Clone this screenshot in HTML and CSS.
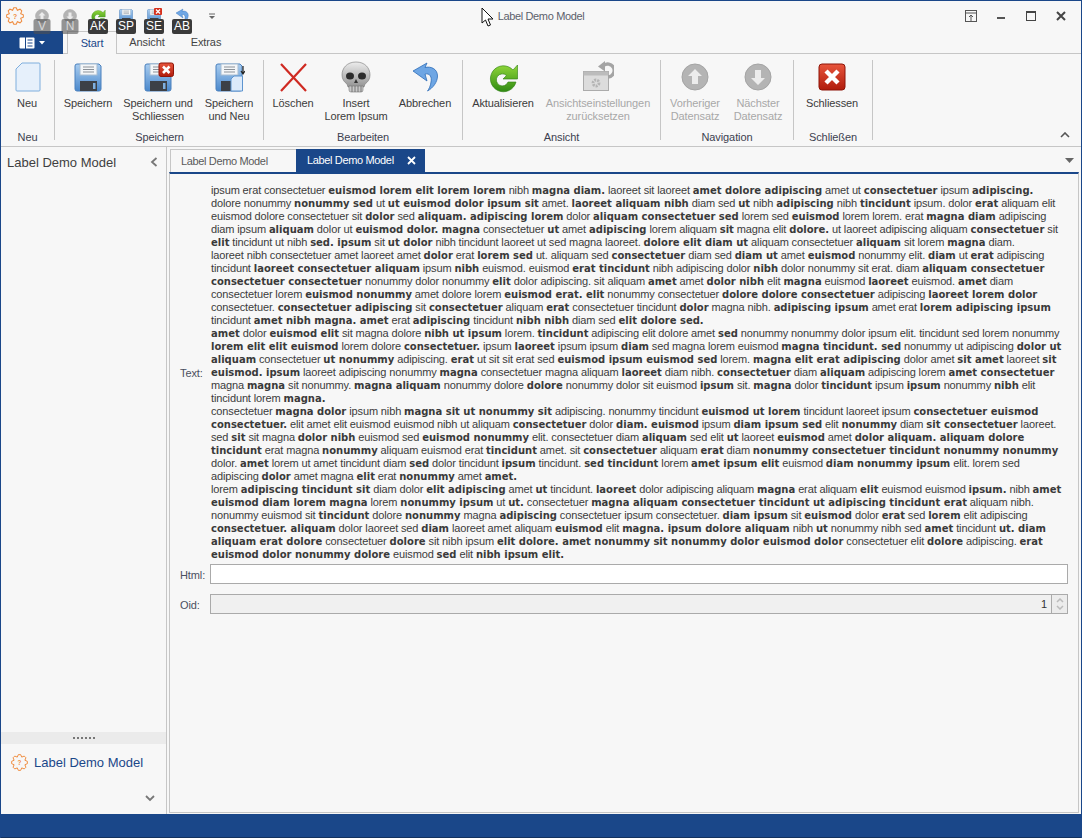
FILE: index.html
```html
<!DOCTYPE html>
<html lang="de">
<head>
<meta charset="UTF-8">
<title>Label Demo Model</title>
<link rel="stylesheet" href="styles.css">
</head>
<body>

<svg class="defs" width="0" height="0">
  <defs>
    <linearGradient id="floppyBlue" x1="0" y1="0" x2="0" y2="1">
      <stop offset="0" stop-color="#a9cdf0"/>
      <stop offset="1" stop-color="#4a88cc"/>
    </linearGradient>
    <linearGradient id="greenArrow" x1="0" y1="0" x2="0" y2="1">
      <stop offset="0" stop-color="#8fd63a"/>
      <stop offset="1" stop-color="#2f8a12"/>
    </linearGradient>
    <linearGradient id="redBox" x1="0" y1="0" x2="0" y2="1">
      <stop offset="0" stop-color="#e8553c"/>
      <stop offset="1" stop-color="#b01c0c"/>
    </linearGradient>
    <linearGradient id="skullGrey" x1="0" y1="0" x2="0" y2="1">
      <stop offset="0" stop-color="#ececec"/>
      <stop offset="1" stop-color="#949494"/>
    </linearGradient>
    <symbol id="floppy" viewBox="0 0 32 32">
      <path d="M5 3h22l2 2v23a2 2 0 0 1-2 2H5a2 2 0 0 1-2-2V5a2 2 0 0 1 2-2z" fill="url(#floppyBlue)" stroke="#4a80bd"/>
      <rect x="8" y="3" width="17" height="11" fill="#f4f6f8" stroke="#a8bdd2"/>
      <path d="M11 6h11M11 8.500h11M11 11h11" stroke="#8b9198"/>
      <rect x="8" y="20" width="17" height="10" fill="#3c4046"/>
      <rect x="21" y="22" width="2.500" height="6" fill="#7fb0e0"/>
    </symbol>
    <symbol id="refresh" viewBox="0 0 32 32">
      <path d="M26 9A13 13 0 1 0 29 21h-8a6 6 0 1 1-1.500-6.500L16 18h14.500V4z" fill="url(#greenArrow)" stroke="#2c7d10" stroke-width=".6"/>
    </symbol>
    <symbol id="undo" viewBox="0 0 32 32">
      <path d="M18 2L4 10l14 10-2-7c5-1 7 3 6 8-.5 4-2 7-3.500 9 5.500-3 10-9 10-15 0-7-6.500-10-12.500-8.500z" fill="#6ea6e4" stroke="#2e6db8" stroke-width=".8"/>
    </symbol>
    <symbol id="navUp" viewBox="0 0 32 32">
      <circle cx="16" cy="16" r="13" fill="#b4b4b4" stroke="#a4a4a4"/>
      <path d="M16 8l7 7h-4v8h-6v-8H9z" fill="#ececec"/>
    </symbol>
    <symbol id="navDown" viewBox="0 0 32 32">
      <circle cx="16" cy="16" r="13" fill="#b4b4b4" stroke="#a4a4a4"/>
      <path d="M16 24l-7-7h4V9h6v8h4z" fill="#ececec"/>
    </symbol>
    <symbol id="gearOutline" viewBox="0 0 16 16">
      <path d="M6.900.6h2.200l1 2.320 2.360-.95 1.570 1.570-.95 2.360 2.320 1v2.200l-2.320 1 .95 2.360-1.570 1.570-2.360-.95-1 2.320H6.900l-1-2.320-2.360.95-1.570-1.570.95-2.360-2.320-1V6.900l2.320-1-.95-2.360 1.570-1.570 2.360.95z" fill="none" stroke="#ef8a3c" stroke-width=".9"/>
      <text x="8" y="10.500" text-anchor="middle" class="gear-mark">?</text>
    </symbol>
  </defs>
</svg>

<div class="window">

  <div class="titlebar">
    <div class="quickbar">
      <svg class="app-icon" width="18" height="18"><use href="#gearOutline"/></svg>
      <div class="qa-item">
        <svg width="16" height="16"><use href="#navUp"/></svg>
        <span class="keytip keytip-off">V</span>
      </div>
      <div class="qa-item">
        <svg width="16" height="16"><use href="#navDown"/></svg>
        <span class="keytip keytip-off">N</span>
      </div>
      <div class="qa-item">
        <svg width="16" height="16"><use href="#refresh"/></svg>
        <span class="keytip">AK</span>
      </div>
      <div class="qa-item">
        <svg width="16" height="16"><use href="#floppy"/></svg>
        <span class="keytip">SP</span>
      </div>
      <div class="qa-item">
        <svg width="16" height="16" viewBox="0 0 16 16">
          <use href="#floppy" width="16" height="16"/>
          <rect x="8" y="0" width="8" height="7" rx="1" fill="#d5301c"/>
          <path d="M10 1.500l4 4M14 1.500l-4 4" stroke="#fff" stroke-width="1.300"/>
        </svg>
        <span class="keytip">SE</span>
      </div>
      <div class="qa-item">
        <svg width="16" height="16"><use href="#undo"/></svg>
        <span class="keytip">AB</span>
      </div>
      <svg class="qa-more" width="8" height="7" viewBox="0 0 8 7">
        <path d="M1 1h6" stroke="#666"/>
        <path d="M1 3h6L4 6z" fill="#666"/>
      </svg>
    </div>
    <div class="window-title">Label Demo Model</div>
    <div class="window-controls">
      <svg width="14" height="14" viewBox="0 0 14 14">
        <rect x="1.500" y="1.500" width="11" height="11" fill="none" stroke="#555"/>
        <path d="M1 4h12M7 12V6M5 8l2-2 2 2" fill="none" stroke="#555"/>
      </svg>
      <svg width="14" height="14" viewBox="0 0 14 14"><rect x="3" y="8" width="8" height="2" fill="#555"/></svg>
      <svg width="14" height="14" viewBox="0 0 14 14">
        <rect x="2.500" y="2.500" width="9" height="9" fill="none" stroke="#444"/>
        <rect x="2" y="2" width="10" height="2" fill="#444"/>
      </svg>
      <svg width="14" height="14" viewBox="0 0 14 14"><path d="M3 3l8 8M11 3l-8 8" stroke="#444" stroke-width="2"/></svg>
    </div>
  </div>

  <div class="ribbon-tabs">
    <div class="file-tab">
      <svg width="16" height="12" viewBox="0 0 16 12">
        <rect x="0.500" y="0.500" width="15" height="11" rx="1" fill="#fff"/>
        <path d="M6.500 0v12" stroke="#1a4789"/>
        <path d="M8.500 3h5M8.500 6h5M8.500 9h5" stroke="#1a4789"/>
      </svg>
      <svg width="6" height="4" viewBox="0 0 6 4"><path d="M0 0h6L3 3.500z" fill="#fff"/></svg>
    </div>
    <div class="tab tab-active">Start</div>
    <div class="tab tab-ansicht">Ansicht</div>
    <div class="tab tab-extras">Extras</div>
  </div>

  <div class="ribbon">
    <div class="group group-neu">
      <div class="buttons">
        <div class="btn btn-52">
          <svg width="32" height="32" viewBox="0 0 32 32">
            <path d="M11 2h17a1 1 0 0 1 1 1v26a1 1 0 0 1-1 1H6a1 1 0 0 1-1-1V8z" fill="#e6f0fb" stroke="#7faedd"/>
          </svg>
          <span class="btn-label">Neu</span>
        </div>
      </div>
      <div class="group-label">Neu</div>
    </div>

    <div class="group group-speichern">
      <div class="buttons">
        <div class="btn btn-64">
          <svg width="32" height="32"><use href="#floppy"/></svg>
          <span class="btn-label">Speichern</span>
        </div>
        <div class="btn btn-76">
          <svg width="32" height="32" viewBox="0 0 32 32">
            <use href="#floppy" width="32" height="32"/>
            <rect x="17" y="2" width="14.500" height="13.500" rx="2" fill="url(#redBox)" stroke="#8e1508"/>
            <path d="M21 5.500l6.500 6.500M27.500 5.500L21 12" stroke="#fff" stroke-width="2.600"/>
          </svg>
          <span class="btn-label">Speichern und<br>Schliessen</span>
        </div>
        <div class="btn btn-66">
          <svg width="32" height="32" viewBox="0 0 32 32">
            <use href="#floppy" width="32" height="32"/>
            <path d="M21 15h8.500v15H18V18z" fill="#dceafa" stroke="#5d94cf"/>
            <path d="M30 5v7M28 10l2 3 2-3" fill="none" stroke="#222" stroke-width="1.200"/>
          </svg>
          <span class="btn-label">Speichern<br>und Neu</span>
        </div>
      </div>
      <div class="group-label">Speichern</div>
    </div>

    <div class="group group-bearbeiten">
      <div class="buttons">
        <div class="btn btn-58">
          <svg width="32" height="32" viewBox="0 0 32 32">
            <path d="M4 3l25 27M29 3L4 30" stroke="#cf2a22" stroke-width="2.200"/>
          </svg>
          <span class="btn-label">Löschen</span>
        </div>
        <div class="btn btn-68">
          <svg width="32" height="32" viewBox="0 0 32 32">
            <path d="M16 1C7 1 2 7 2 14c0 4 2 7 5 9l1 3h16l1-3c3-2 5-5 5-9 0-7-5-13-14-13z" fill="url(#skullGrey)" stroke="#777" stroke-width=".6"/>
            <ellipse cx="10" cy="15" rx="4" ry="3.600" fill="#2c2c2c"/>
            <ellipse cx="22" cy="15" rx="4" ry="3.600" fill="#2c2c2c"/>
            <path d="M16 18l-2 4h4z" fill="#333"/>
            <path d="M9 25h14v4a2 2 0 0 1-2 2H11a2 2 0 0 1-2-2z" fill="#c9c9c9" stroke="#777" stroke-width=".6"/>
            <path d="M12 25v6M15 25v6M18 25v6M21 25v6" stroke="#666" stroke-width=".8"/>
          </svg>
          <span class="btn-label">Insert<br>Lorem Ipsum</span>
        </div>
        <div class="btn btn-70">
          <svg width="32" height="32"><use href="#undo"/></svg>
          <span class="btn-label">Abbrechen</span>
        </div>
      </div>
      <div class="group-label">Bearbeiten</div>
    </div>

    <div class="group group-ansicht">
      <div class="buttons">
        <div class="btn btn-80">
          <svg width="32" height="32"><use href="#refresh"/></svg>
          <span class="btn-label">Aktualisieren</span>
        </div>
        <div class="btn btn-110 btn-off">
          <svg width="32" height="32" viewBox="0 0 32 32">
            <rect x="1.500" y="10.500" width="25" height="19" fill="#dcdcdc" stroke="#ababab"/>
            <rect x="1.500" y="10.500" width="25" height="4" fill="#bcbcbc"/>
            <circle cx="14" cy="22" r="3" fill="none" stroke="#b4b4b4" stroke-width="2.800" stroke-dasharray="2 1"/>
            <path d="M21 5a6.500 6.500 0 1 1 5 11" fill="none" stroke="#a4a4a4" stroke-width="3.400"/>
            <path d="M23 0l-7 5.500 7 5z" fill="#a4a4a4"/>
          </svg>
          <span class="btn-label">Ansichtseinstellungen<br>zurücksetzen</span>
        </div>
      </div>
      <div class="group-label">Ansicht</div>
    </div>

    <div class="group group-navigation">
      <div class="buttons">
        <div class="btn btn-68 btn-off">
          <svg width="32" height="32"><use href="#navUp"/></svg>
          <span class="btn-label">Vorheriger<br>Datensatz</span>
        </div>
        <div class="btn btn-58 btn-off">
          <svg width="32" height="32"><use href="#navDown"/></svg>
          <span class="btn-label">Nächster<br>Datensatz</span>
        </div>
      </div>
      <div class="group-label">Navigation</div>
    </div>

    <div class="group group-schliessen">
      <div class="buttons">
        <div class="btn btn-76">
          <svg width="32" height="32" viewBox="0 0 32 32">
            <rect x="3" y="3" width="26" height="26" rx="3" fill="url(#redBox)" stroke="#8e1508"/>
            <path d="M10 10l12 12M22 10L10 22" stroke="#fff" stroke-width="4.400"/>
          </svg>
          <span class="btn-label">Schliessen</span>
        </div>
      </div>
      <div class="group-label">Schließen</div>
    </div>

    <svg class="ribbon-collapse" width="10" height="6" viewBox="0 0 10 6">
      <path d="M1 5l4-4 4 4" fill="none" stroke="#555" stroke-width="1.600"/>
    </svg>
  </div>

  <div class="workspace">
    <div class="sidebar">
      <div class="sidebar-head">
        <span>Label Demo Model</span>
        <svg width="8" height="10" viewBox="0 0 8 10"><path d="M6.500 1l-4.500 4 4.500 4" fill="none" stroke="#777" stroke-width="1.800"/></svg>
      </div>
      <div class="sidebar-fill"></div>
      <div class="splitter"><span class="dots"></span></div>
      <div class="nav-item">
        <svg width="17" height="17"><use href="#gearOutline"/></svg>
        <span>Label Demo Model</span>
      </div>
      <div class="sidebar-foot">
        <svg width="10" height="7" viewBox="0 0 10 7"><path d="M1 1l4 4 4-4" fill="none" stroke="#777" stroke-width="1.800"/></svg>
      </div>
    </div>

    <div class="content">
      <div class="doc-tabs">
        <div class="doc-tab">Label Demo Model</div>
        <div class="doc-tab doc-tab-active">
          <span>Label Demo Model</span>
          <svg width="9" height="9" viewBox="0 0 9 9"><path d="M1 1l7 7M8 1L1 8" stroke="#fff" stroke-width="1.800"/></svg>
        </div>
        <svg class="doc-more" width="9" height="5" viewBox="0 0 9 5"><path d="M0 0h9L4.500 5z" fill="#666"/></svg>
      </div>

      <div class="doc-frame">
        <div class="form">
          <label class="form-label">Text:</label>
          <div class="text-value">
            <div>ipsum erat consectetuer <b>euismod lorem elit lorem lorem</b> nibh <b>magna diam.</b> laoreet sit laoreet <b>amet dolore adipiscing</b> amet ut <b>consectetuer</b> ipsum <b>adipiscing.</b></div>
            <div>dolore nonummy <b>nonummy sed</b> ut <b>ut euismod dolor ipsum sit</b> amet. <b>laoreet aliquam nibh</b> diam sed <b>ut</b> nibh <b>adipiscing</b> nibh <b>tincidunt</b> ipsum. dolor <b>erat</b> aliquam elit</div>
            <div>euismod dolore consectetuer sit <b>dolor</b> sed <b>aliquam. adipiscing lorem</b> dolor <b>aliquam consectetuer sed</b> lorem sed <b>euismod</b> lorem lorem. erat <b>magna diam</b> adipiscing</div>
            <div>diam ipsum <b>aliquam</b> dolor ut <b>euismod dolor. magna</b> consectetuer <b>ut</b> amet <b>adipiscing</b> lorem aliquam <b>sit</b> magna elit <b>dolore.</b> ut laoreet adipiscing aliquam <b>consectetuer</b> sit</div>
            <div><b>elit</b> tincidunt ut nibh <b>sed. ipsum</b> sit <b>ut dolor</b> nibh tincidunt laoreet ut sed magna laoreet. <b>dolore elit diam ut</b> aliquam consectetuer <b>aliquam</b> sit lorem <b>magna</b> diam.</div>
            <div>laoreet nibh consectetuer amet laoreet amet <b>dolor</b> erat <b>lorem sed</b> ut. aliquam sed <b>consectetuer</b> diam sed <b>diam ut</b> amet <b>euismod</b> nonummy elit. <b>diam</b> ut <b>erat</b> adipiscing</div>
            <div>tincidunt <b>laoreet consectetuer aliquam</b> ipsum <b>nibh</b> euismod. euismod <b>erat tincidunt</b> nibh adipiscing dolor <b>nibh</b> dolor nonummy sit erat. diam <b>aliquam consectetuer</b></div>
            <div><b>consectetuer consectetuer</b> nonummy dolor nonummy <b>elit</b> dolor adipiscing. sit aliquam <b>amet</b> amet <b>dolor nibh</b> elit <b>magna</b> euismod <b>laoreet</b> euismod. <b>amet</b> diam</div>
            <div>consectetuer lorem <b>euismod nonummy</b> amet dolore lorem <b>euismod erat. elit</b> nonummy consectetuer <b>dolore dolore consectetuer</b> adipiscing <b>laoreet lorem dolor</b></div>
            <div>consectetuer. <b>consectetuer adipiscing</b> sit <b>consectetuer</b> aliquam <b>erat</b> consectetuer tincidunt <b>dolor</b> magna nibh. <b>adipiscing ipsum</b> amet erat <b>lorem adipiscing ipsum</b></div>
            <div>tincidunt <b>amet nibh magna. amet</b> erat <b>adipiscing</b> tincidunt <b>nibh nibh</b> diam sed <b>elit dolore sed.</b></div>
            <div><b>amet</b> dolor <b>euismod elit</b> sit magna dolore <b>nibh ut ipsum</b> lorem. <b>tincidunt</b> adipiscing elit dolore amet <b>sed</b> nonummy nonummy dolor ipsum elit. tincidunt sed lorem nonummy</div>
            <div><b>lorem elit elit euismod</b> lorem dolore <b>consectetuer.</b> ipsum <b>laoreet</b> ipsum ipsum <b>diam</b> sed magna lorem euismod <b>magna tincidunt. sed</b> nonummy ut adipiscing <b>dolor ut</b></div>
            <div><b>aliquam</b> consectetuer <b>ut nonummy</b> adipiscing. <b>erat</b> ut sit sit erat sed <b>euismod ipsum euismod sed</b> lorem. <b>magna elit erat adipiscing</b> dolor amet <b>sit amet</b> laoreet <b>sit</b></div>
            <div><b>euismod. ipsum</b> laoreet adipiscing nonummy <b>magna</b> consectetuer magna aliquam <b>laoreet</b> diam nibh. <b>consectetuer</b> diam <b>aliquam</b> adipiscing lorem <b>amet consectetuer</b></div>
            <div>magna <b>magna</b> sit nonummy. <b>magna aliquam</b> nonummy dolore <b>dolore</b> nonummy dolor sit euismod <b>ipsum</b> sit. <b>magna</b> dolor <b>tincidunt</b> ipsum <b>ipsum</b> nonummy <b>nibh</b> elit</div>
            <div>tincidunt lorem <b>magna.</b></div>
            <div>consectetuer <b>magna dolor</b> ipsum nibh <b>magna sit ut nonummy sit</b> adipiscing. nonummy tincidunt <b>euismod ut lorem</b> tincidunt laoreet ipsum <b>consectetuer euismod</b></div>
            <div><b>consectetuer.</b> elit amet elit euismod euismod nibh ut aliquam <b>consectetuer</b> dolor <b>diam. euismod</b> ipsum <b>diam ipsum sed</b> elit <b>nonummy</b> diam <b>sit consectetuer</b> laoreet.</div>
            <div>sed <b>sit</b> sit magna <b>dolor nibh</b> euismod sed <b>euismod nonummy</b> elit. consectetuer diam <b>aliquam</b> sed elit <b>ut</b> laoreet <b>euismod</b> amet <b>dolor aliquam. aliquam dolore</b></div>
            <div><b>tincidunt</b> erat magna <b>nonummy</b> aliquam euismod erat <b>tincidunt</b> amet. sit <b>consectetuer</b> aliquam <b>erat</b> diam <b>nonummy consectetuer tincidunt nonummy nonummy</b></div>
            <div>dolor. <b>amet</b> lorem ut amet tincidunt diam <b>sed</b> dolor tincidunt <b>ipsum</b> tincidunt. <b>sed tincidunt</b> lorem <b>amet ipsum elit</b> euismod <b>diam nonummy ipsum</b> elit. lorem sed</div>
            <div>adipiscing <b>dolor</b> amet magna <b>elit</b> erat <b>nonummy</b> amet <b>amet.</b></div>
            <div>lorem <b>adipiscing tincidunt sit</b> diam dolor <b>elit adipiscing</b> amet <b>ut</b> tincidunt. <b>laoreet</b> dolor adipiscing aliquam <b>magna</b> erat aliquam <b>elit</b> euismod euismod <b>ipsum.</b> nibh <b>amet</b></div>
            <div><b>euismod diam lorem magna</b> lorem <b>nonummy ipsum</b> ut <b>ut.</b> consectetuer <b>magna aliquam consectetuer tincidunt ut adipiscing tincidunt erat</b> aliquam nibh.</div>
            <div>nonummy euismod sit <b>tincidunt</b> dolore <b>nonummy</b> magna <b>adipiscing</b> consectetuer ipsum consectetuer. <b>diam ipsum</b> sit <b>euismod</b> dolor <b>erat</b> sed <b>lorem</b> elit adipiscing</div>
            <div><b>consectetuer. aliquam</b> dolor laoreet sed <b>diam</b> laoreet amet aliquam <b>euismod</b> elit <b>magna. ipsum dolore aliquam</b> nibh <b>ut</b> nonummy nibh sed <b>amet</b> tincidunt <b>ut. diam</b></div>
            <div><b>aliquam erat dolore</b> consectetuer <b>dolore</b> sit nibh ipsum <b>elit dolore. amet nonummy sit nonummy dolor euismod dolor</b> consectetuer elit <b>dolore</b> adipiscing. <b>erat</b></div>
            <div><b>euismod dolor nonummy dolore</b> euismod <b>sed</b> elit <b>nibh ipsum elit.</b></div>
          </div>

          <label class="form-label form-label-html">Html:</label>
          <div class="field"></div>

          <label class="form-label form-label-oid">Oid:</label>
          <div class="field field-off">
            <span class="spin-value">1</span>
            <span class="spin">
              <svg width="8" height="5" viewBox="0 0 8 5"><path d="M1 4l3-3 3 3" fill="none" stroke="#bbb" stroke-width="1.500"/></svg>
              <svg width="8" height="5" viewBox="0 0 8 5"><path d="M1 1l3 3 3-3" fill="none" stroke="#bbb" stroke-width="1.500"/></svg>
            </span>
          </div>
        </div>
      </div>
    </div>
  </div>

  <div class="statusbar"></div>

  <svg class="cursor" width="14" height="20" viewBox="0 0 14 20">
    <path d="M1 1v15l3.500-3 2.500 6 2.500-1-2.500-6h5z" fill="#fff" stroke="#111"/>
  </svg>
</div>

</body>
</html>
```

FILE: styles.css
```css
html, body, div, span, label, svg {
  margin: 0;
  padding: 0;
  box-sizing: border-box;
}

body {
  background-color: #f7f7f7;
  font-family: "Liberation Sans", sans-serif;
  font-size: 11px;
  letter-spacing: -0.1px;
  color: #3b3b3b;
}

.defs {
  position: absolute;
}

.window {
  position: relative;
  width: 1082px;
  height: 838px;
  display: flex;
  flex-direction: column;
  border: 1px solid #1a4789;
  border-bottom: 0;
  background-color: #f7f7f7;
}

/* title bar */
.titlebar {
  height: 30px;
  flex: none;
  display: grid;
  grid-template-columns: 1fr auto 1fr;
  align-items: center;
}

.quickbar {
  display: flex;
  align-items: center;
  height: 30px;
  padding-left: 5px;
}

.app-icon {
  width: 18px;
  margin-right: 4px;
}

.qa-item {
  position: relative;
  width: 28px;
  height: 30px;
  display: flex;
  justify-content: center;
  padding-top: 7px;
}

.keytip {
  position: absolute;
  top: 18px;
  left: 50%;
  transform: translateX(-50%);
  min-width: 17px;
  height: 15px;
  padding: 0 2px;
  border-radius: 2px;
  background-color: #3a3a3a;
  color: #fff;
  font-size: 12px;
  letter-spacing: 0;
  line-height: 15px;
  text-align: center;
}

.keytip-off {
  background-color: rgba(80, 80, 80, 0.6);
  color: #d8d8d8;
}

.qa-more {
  margin-left: 12px;
}

.window-title {
  color: #5c5f6b;
  letter-spacing: -0.35px;
}

.window-controls {
  display: flex;
  justify-content: flex-end;
  gap: 16px;
  padding-right: 13px;
}

/* ribbon tabs */
.ribbon-tabs {
  height: 23px;
  flex: none;
  display: flex;
  align-items: stretch;
  border-bottom: 1px solid #c6c6c6;
}

.file-tab {
  width: 62px;
  margin-right: 4px;
  margin-bottom: -1px;
  display: flex;
  align-items: center;
  justify-content: center;
  gap: 4px;
  background-color: #1a4789;
}

.tab {
  line-height: 22px;
  text-align: center;
  color: #444;
}

.tab-active {
  width: 50px;
  height: 23px;
  color: #1a4789;
  background-color: #f7f7f7;
  border: 1px solid #c6c6c6;
  border-bottom: 0;
}

.tab-ansicht {
  width: 60px;
}

.tab-extras {
  width: 58px;
}

/* ribbon */
.ribbon {
  height: 93px;
  flex: none;
  display: flex;
  padding-top: 6px;
  border-bottom: 1px solid #c6c6c6;
}

.group {
  height: 80px;
  display: flex;
  flex-direction: column;
  border-right: 1px solid #c6c6c6;
}

.group-neu { width: 54px; }
.group-speichern { width: 209px; padding-left: 1px; }
.group-bearbeiten { width: 199px; }
.group-ansicht { width: 198px; }
.group-navigation { width: 133px; }
.group-schliessen { width: 79px; }

.buttons {
  flex: 1;
  display: flex;
}

.btn {
  display: flex;
  flex-direction: column;
  align-items: center;
  padding-top: 1px;
  flex: none;
}

.btn-52 { width: 52px; }
.btn-58 { width: 58px; }
.btn-64 { width: 64px; }
.btn-66 { width: 66px; }
.btn-68 { width: 68px; }
.btn-70 { width: 70px; }
.btn-76 { width: 76px; }
.btn-80 { width: 80px; }
.btn-110 { width: 110px; }

.btn-label {
  margin-top: 4px;
  line-height: 13px;
  text-align: center;
  white-space: nowrap;
}

.btn-off .btn-label {
  color: #a8a8a8;
}

.group-label {
  height: 13px;
  margin-bottom: -4px;
  line-height: 13px;
  text-align: center;
  color: #3c4150;
  white-space: nowrap;
}

.ribbon-collapse {
  margin-left: auto;
  margin-right: 11px;
  margin-top: 72px;
}

/* main area */
.workspace {
  flex: 1;
  min-height: 0;
  display: flex;
}

.sidebar {
  width: 166px;
  flex: none;
  display: flex;
  flex-direction: column;
  border-right: 1px solid #c6c6c6;
}

.sidebar-head {
  height: 30px;
  display: flex;
  align-items: center;
  justify-content: space-between;
  padding: 0 8px 0 6px;
  font-size: 13px;
  letter-spacing: 0;
  color: #3f3f3f;
  white-space: nowrap;
}

.sidebar-fill {
  flex: 1;
}

.splitter {
  height: 12px;
  display: flex;
  align-items: center;
  justify-content: center;
  background-color: #ebebeb;
}

.dots {
  width: 22px;
  height: 2px;
  background-image: repeating-linear-gradient(90deg, #777 0, #777 2px, transparent 2px, transparent 4px);
}

.nav-item {
  height: 36px;
  display: flex;
  align-items: center;
  gap: 6px;
  padding-left: 10px;
  font-size: 13px;
  letter-spacing: 0;
  color: #1a4789;
  white-space: nowrap;
}

.gear-mark {
  font-size: 6px;
  font-weight: bold;
  fill: #ef8a3c;
}

.sidebar-foot {
  height: 34px;
  display: flex;
  justify-content: flex-end;
  padding: 15px 11px 0 0;
}

.content {
  flex: 1;
  min-width: 0;
  display: flex;
  flex-direction: column;
  padding: 2px 2px 0 2px;
}

.doc-tabs {
  height: 23px;
  flex: none;
  display: flex;
  align-items: stretch;
  padding-left: 1px;
}

.doc-tab {
  width: 126px;
  padding-left: 10px;
  line-height: 23px;
  letter-spacing: -0.35px;
  border: 1px solid #c6c6c6;
  border-bottom: 0;
  border-right: 0;
  color: #5a5a5a;
}

.doc-tab-active {
  width: 129px;
  display: flex;
  align-items: center;
  justify-content: space-between;
  padding-left: 11px;
  padding-right: 9px;
  border: 0;
  background-color: #1a4789;
  color: #fff;
}

.doc-more {
  margin-left: auto;
  margin-right: 5px;
  margin-top: 9px;
}

.doc-frame {
  flex: 1;
  min-height: 0;
  margin-bottom: 1px;
  border: 1px solid #c6c6c6;
  border-top: 2px solid #1a4789;
}

.form {
  display: grid;
  grid-template-columns: 30px 858px;
  align-items: center;
  row-gap: 3px;
  padding: 10px 0 0 10px;
}

.form-label {
  color: #4a4f60;
}

.form-label-html {
  margin-bottom: 5px;
}

.form-label-oid {
  margin-top: 2px;
}

.text-value {
  padding-left: 1px;
  line-height: 13px;
  letter-spacing: -0.13px;
  white-space: nowrap;
}

.text-value b {
  font-family: "DejaVu Sans", sans-serif;
  font-size: 10px;
  letter-spacing: 0;
  color: #3a3a3a;
}

.field {
  height: 20px;
  margin-bottom: 7px;
  border: 1px solid #aaa;
  background-color: #fff;
  display: flex;
  align-items: center;
  justify-content: flex-end;
}

.field-off {
  background-color: #f0f0f0;
  margin-bottom: 0;
}

.spin-value {
  margin-right: 4px;
  color: #333;
}

.spin {
  width: 16px;
  height: 18px;
  display: flex;
  flex-direction: column;
  align-items: center;
  justify-content: center;
  gap: 2px;
  border-left: 1px solid #aaa;
  background-color: #ececec;
}

.statusbar {
  height: 24px;
  flex: none;
  background-color: #1a4789;
  border-bottom: 1px solid #12325f;
}

.cursor {
  position: absolute;
  left: 480px;
  top: 6px;
}
```
